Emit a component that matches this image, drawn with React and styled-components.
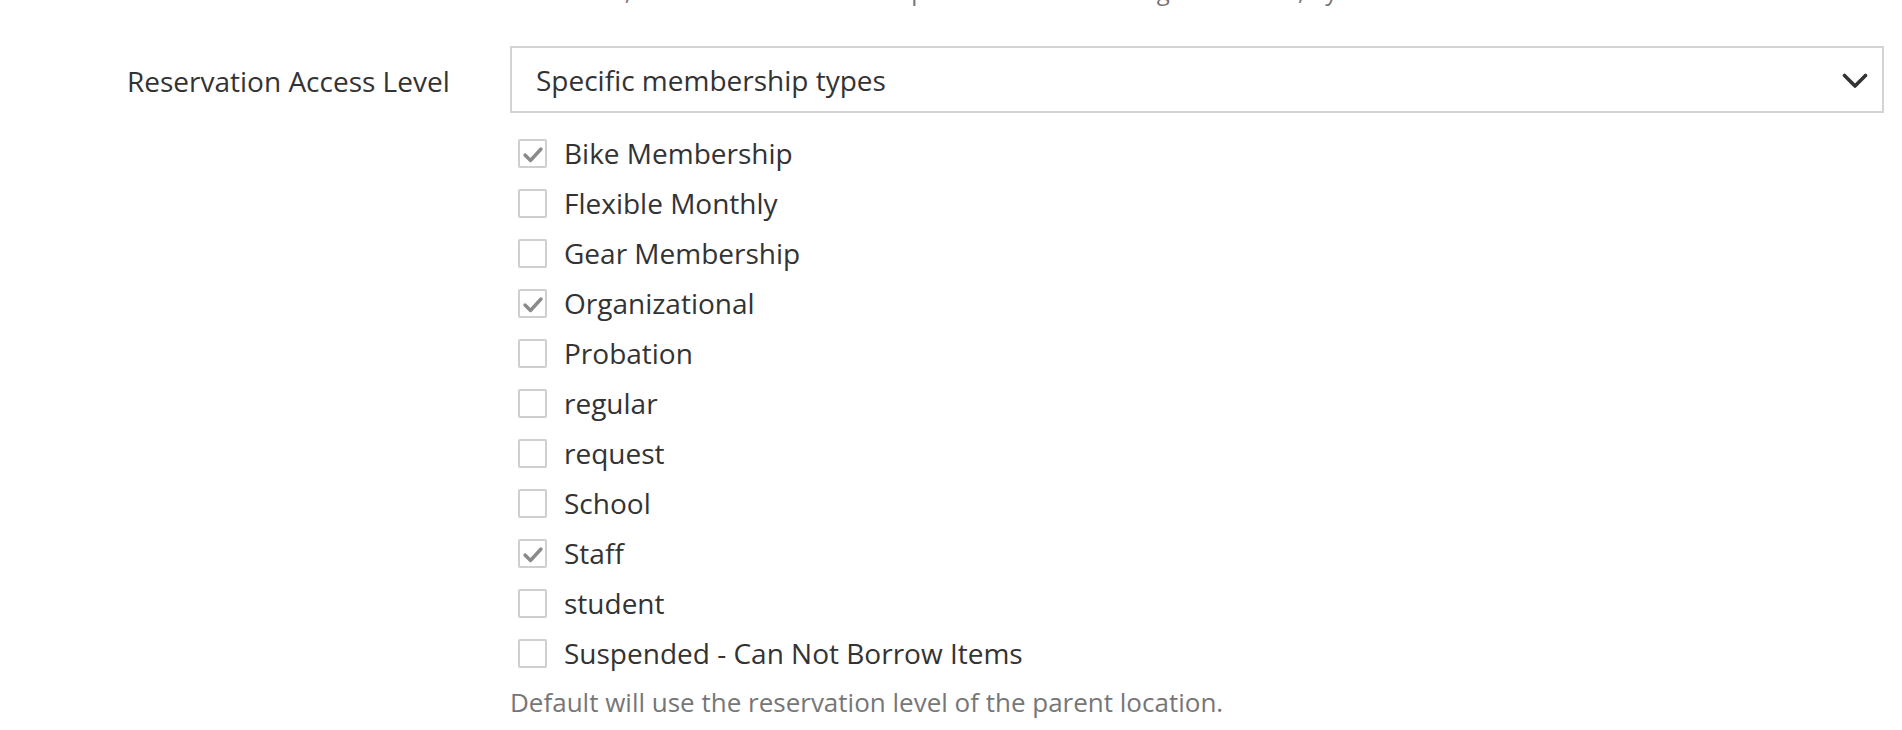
import React, { useState } from 'react';
import styled, { createGlobalStyle } from 'styled-components';

const GlobalStyle = createGlobalStyle`
  html, body {
    margin: 0;
    padding: 0;
    background: #fff;
  }
  body {
    font-family: "Open Sans", "Noto Sans", "Liberation Sans", sans-serif;
    color: #333;
    overflow: hidden;
  }
`;

const Page = styled.div`
  width: 1902px;
  height: 730px;
  box-sizing: border-box;
  padding: 0 18px 0 127px;
  overflow: hidden;
`;

const FieldRow = styled.div`
  display: grid;
  grid-template-columns: 383px 1fr;
  margin-top: ${props => props.offset || 0}px;
`;

const Label = styled.label`
  height: 67px;
  display: flex;
  align-items: center;
  font-size: 28px;
  color: #333;
  padding-top: 2px;
  box-sizing: border-box;
`;

const Control = styled.div`
  display: flex;
  flex-direction: column;
  min-width: 0;
`;

const Help = styled.div`
  font-size: ${props => props.size || 26}px;
  line-height: 36px;
  color: #767676;
  white-space: nowrap;
  margin-top: ${props => props.offset || 0}px;
`;

const SelectBox = styled.div`
  height: 67px;
  box-sizing: border-box;
  border: 2px solid #d3d3d3;
  display: flex;
  align-items: center;
  justify-content: space-between;
  padding: 0 14px 0 24px;
  font-size: 28px;
  color: #333;
  cursor: pointer;
`;

const Chevron = styled.svg`
  width: 26px;
  height: 16px;
  margin-top: 2px;
`;

const List = styled.div`
  display: flex;
  flex-direction: column;
  margin-top: 15px;
`;

const Option = styled.label`
  height: 50px;
  display: flex;
  align-items: center;
  gap: 17px;
  padding-left: 8px;
  font-size: 28px;
  color: #333;
  cursor: pointer;
`;

const Box = styled.span`
  width: 29px;
  height: 29px;
  box-sizing: border-box;
  border: 2px solid #cfcfcf;
  border-radius: 2px;
  background: #fff;
  display: flex;
  align-items: center;
  justify-content: center;
  flex: none;
`;

const CheckMark = styled.svg`
  width: 25px;
  height: 25px;
`;

const types = [
  { name: 'Bike Membership', on: true },
  { name: 'Flexible Monthly', on: false },
  { name: 'Gear Membership', on: false },
  { name: 'Organizational', on: true },
  { name: 'Probation', on: false },
  { name: 'regular', on: false },
  { name: 'request', on: false },
  { name: 'School', on: false },
  { name: 'Staff', on: true },
  { name: 'student', on: false },
  { name: 'Suspended - Can Not Borrow Items', on: false },
];

const App = () => {
  const [checked, setChecked] = useState(types.map(t => t.on));

  const toggle = i => {
    setChecked(checked.map((c, j) => (j === i ? !c : c)));
  };

  return (
    <>
      <GlobalStyle />
      <Page>
        <FieldRow>
          <span />
          {/* tail of the previous field's help text, scrolled off the top */}
          <Help size={24} offset={-27}>
            Otherwise, members will be able to place reservations on gear in stock, by default.
          </Help>
        </FieldRow>
        <FieldRow offset={37}>
          <Label>Reservation Access Level</Label>
          <Control>
            <SelectBox>
              <span>Specific membership types</span>
              <Chevron viewBox="0 0 26 16">
                <polyline
                  points="2.5,2.5 13,13 23.5,2.5"
                  fill="none"
                  stroke="#333"
                  strokeWidth="3.6"
                  strokeLinecap="round"
                  strokeLinejoin="round"
                />
              </Chevron>
            </SelectBox>
            <List>
              {types.map((t, i) => (
                <Option key={t.name} onClick={() => toggle(i)}>
                  <Box>
                    {checked[i] && (
                      <CheckMark viewBox="0 0 25 25">
                        <polyline
                          points="5,14 10.5,19.5 21,8"
                          fill="none"
                          stroke="#8a8a8a"
                          strokeWidth="3.4"
                          strokeLinecap="round"
                          strokeLinejoin="round"
                        />
                      </CheckMark>
                    )}
                  </Box>
                  {t.name}
                </Option>
              ))}
            </List>
            <Help offset={6}>Default will use the reservation level of the parent location.</Help>
          </Control>
        </FieldRow>
      </Page>
    </>
  );
};

export default App;
